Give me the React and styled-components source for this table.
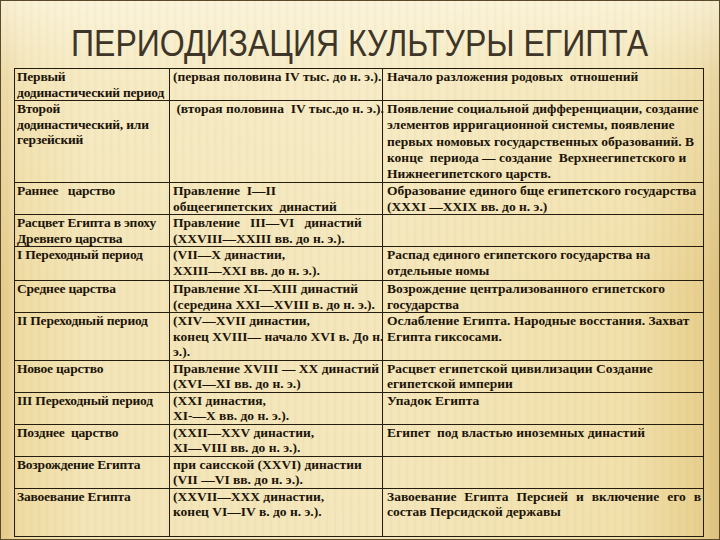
import React from "react";
import styled, { createGlobalStyle } from "styled-components";

const GlobalStyle = createGlobalStyle`
    html, body {
        margin: 0;
        padding: 0;
    }
    body {
        background: #f3e7bf;
    }
`;

// Styled components
const Slide = styled.div`
    width: 720px;
    height: 540px;
    box-sizing: border-box;
    border: 1px solid #5a4a2a;
    display: flex;
    flex-direction: column;
    overflow: hidden;
    background:
        repeating-linear-gradient(90deg, rgba(255, 255, 255, 0) 0px, rgba(255, 255, 255, 0) 5px, rgba(190, 150, 60, 0.08) 6px, rgba(255, 255, 255, 0) 8px),
        linear-gradient(180deg, rgba(252, 247, 226, 0.8) 0%, rgba(250, 243, 215, 0.4) 14%, rgba(240, 226, 170, 0) 55%),
        linear-gradient(90deg, #e3c98a 0%, #efdca4 3%, #f3e5b8 12%, #f4e7bd 50%, #f1e0ab 88%, #e8d090 97%, #dcc07e 100%);
`;

const Title = styled.h1`
    flex-shrink: 0;
    height: 67px;
    box-sizing: border-box;
    padding-top: 19px;
    margin: 0;
    display: flex;
    align-items: center;
    justify-content: center;
    font-family: "Liberation Sans", Arial, sans-serif;
    font-weight: normal;
    font-size: 37px;
    line-height: 1.15;
    color: #3d3628;
    white-space: nowrap;
`;

const TitleText = styled.span`
    display: inline-block;
    transform: scaleX(0.865);
`;

const Table = styled.table`
    flex-shrink: 0;
    margin-left: 13px;
    width: 689px;
    border-collapse: collapse;
    table-layout: fixed;
    font-family: "Liberation Serif", "Times New Roman", serif;
    font-weight: bold;
    font-size: 13.5px;
    line-height: 15.5px;
    color: #1c1409;
`;

const Row = styled.tr`
    height: ${(props) => props.h}px;
`;

const Cell = styled.td`
    border: 1px solid #241d10;
    padding: 0 2px 0 ${(props) => props.pl || 3}px;
    vertical-align: top;
    white-space: ${(props) => (props.justify ? "normal" : "pre")};
    text-align: ${(props) => (props.justify ? "justify" : "left")};
    line-height: ${(props) => props.lh || "15.5px"};
    letter-spacing: ${(props) => (props.tight ? "-0.2px" : "normal")};
`;

/*
    rows: [period, dynasties / dates, events, row height, events justified, events line height]
*/
const rows = [
    ["Первый\nдодинастический период", "(первая половина IV тыс. до н. э.).", "Начало разложения родовых  отношений", 32],
    [
        "Второй\nдодинастический, или\nгерзейский",
        " (вторая половина  IV тыс.до н. э.).",
        "Появление социальной дифференциации, создание\nэлементов ирригационной системы, появление\nпервых номовых государственных образований. В\nконце  периода — создание  Верхнеегипетского и\nНижнеегипетского царств.",
        80,
        false,
        "16.3px",
    ],
    ["Раннее   царство", "Правление  I—II\nобщеегипетских  династий", "Образование единого бще египетского государства\n(XXXI —XXIX вв. до н. э.)", 31],
    ["Расцвет Египта в эпоху\nДревнего царства", "Правление   III—VI   династий\n(XXVIII—XXIII вв. до н. э.).", "", 31],
    ["I Переходный период", "(VII—X династии,\nXXIII—XXI вв. до н. э.).", "Распад единого египетского государства на\nотдельные номы", 34],
    ["Среднее царства", "Правление XI—XIII династий\n(середина XXI—XVIII в. до н. э.).", "Возрождение централизованного египетского\nгосударства", 31],
    ["II Переходный период", "(XIV—XVII династии,\nконец XVIII— начало XVI в. До н.\nэ.).", "Ослабление Египта. Народные восстания. Захват\nЕгипта гиксосами.", 46],
    ["Новое царство", "Правление XVIII — XX династий\n(XVI—XI вв. до н. э.)", "Расцвет египетской цивилизации Создание\nегипетской империи", 31],
    ["III Переходный период", "(XXI династия,\nXI-—X вв. до н. э.).", "Упадок Египта", 31],
    ["Позднее  царство", "(XXII—XXV династии,\nXI—VIII вв. до н. э.).", "Египет  под властью иноземных династий", 31],
    ["Возрождение Египта", "при саисской (XXVI) династии\n(VII —VI вв. до н. э.).", "", 31],
    ["Завоевание Египта", "(XXVII—XXX династии,\nконец VI—IV в. до н. э.).", "Завоевание Египта Персией и включение его в состав Персидской державы", 48, true],
];

export default function App() {
    return (
        <>
            <GlobalStyle />
            <Slide>
                <Title>
                    <TitleText>ПЕРИОДИЗАЦИЯ КУЛЬТУРЫ ЕГИПТА</TitleText>
                </Title>
                <Table>
                    <colgroup>
                        <col style={{ width: 155 }} />
                        <col style={{ width: 213 }} />
                        <col style={{ width: 321 }} />
                    </colgroup>
                    <tbody>
                        {rows.map(([period, dates, events, h, justify, lh], i) => (
                            <Row key={i} h={h}>
                                <Cell pl={2} tight>
                                    {period}
                                </Cell>
                                <Cell>{dates}</Cell>
                                <Cell pl={4} justify={justify} lh={lh}>
                                    {events}
                                </Cell>
                            </Row>
                        ))}
                    </tbody>
                </Table>
            </Slide>
        </>
    );
}
